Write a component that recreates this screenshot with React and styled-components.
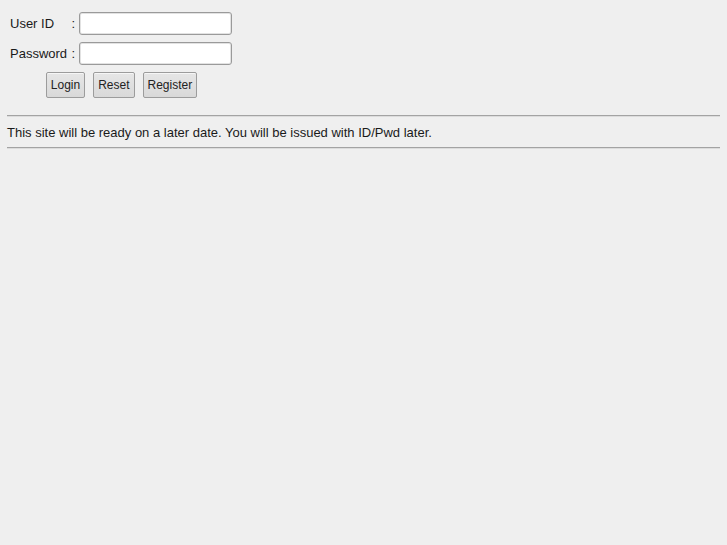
import React, { useState } from 'react';
import styled, { createGlobalStyle } from 'styled-components';

const GlobalStyle = createGlobalStyle`
  html, body {
    margin: 0;
    background: #efefef;
  }
  body {
    font-family: "Liberation Sans", Arial, sans-serif;
    font-size: 13px;
    color: #1a1a1a;
  }
`;

const Page = styled.div`
  padding: 7px;
`;

const LoginForm = styled.form`
  display: inline-grid;
  grid-template-columns: auto auto;
  column-gap: 4px;
  row-gap: 7px;
  align-items: center;
  padding: 5px 2px 0 3px;
`;

const Label = styled.label`
  display: flex;
  justify-content: space-between;
  width: 65px;
  white-space: pre;
`;

const TextInput = styled.input`
  box-sizing: border-box;
  width: 153px;
  height: 23px;
  margin: 0;
  padding: 2px 4px;
  border: 1px solid #9a9a9a;
  border-radius: 3px;
  background: #fff;
  box-shadow: inset 0 0 0 1px #e2e2e2;
  font: inherit;
  outline: none;
`;

const ButtonRow = styled.div`
  grid-column: 1 / span 2;
  display: flex;
  justify-content: center;
  gap: 8px;
  padding-left: 1px;
`;

const Button = styled.button`
  box-sizing: border-box;
  height: 26px;
  padding: 0 4px;
  border: 1px solid #9c9c9c;
  border-radius: 2px;
  background: linear-gradient(#e6e6e6, #d9d9d9);
  box-shadow: inset 0 1px 0 #f6f6f6;
  font-family: "Liberation Sans", Arial, sans-serif;
  font-size: 12px;
  color: #222;
  cursor: pointer;
`;

const Divider = styled.hr`
  margin: ${(p) => p.$top}px 0 0;
  height: 0;
  border: none;
  border-top: 1px solid #a3a3a3;
  border-bottom: 1px solid #dcdcdc;
`;

const Notice = styled.p`
  margin: 8px 0 7px;
  line-height: 15px;
`;

function App() {
  const [userId, setUserId] = useState('');
  const [password, setPassword] = useState('');

  const handleReset = () => {
    setUserId('');
    setPassword('');
  };

  return (
    <Page>
      <GlobalStyle />
      <LoginForm onSubmit={(e) => e.preventDefault()}>
        <Label htmlFor="uid">
          <span>User ID</span>
          <span>:</span>
        </Label>
        <TextInput id="uid" type="text" value={userId} onChange={(e) => setUserId(e.target.value)} />
        <Label htmlFor="pwd">
          <span>Password</span>
          <span>:</span>
        </Label>
        <TextInput id="pwd" type="password" value={password} onChange={(e) => setPassword(e.target.value)} />
        <ButtonRow>
          <Button type="submit">Login</Button>
          <Button type="button" onClick={handleReset}>Reset</Button>
          <Button type="button">Register</Button>
        </ButtonRow>
      </LoginForm>
      <Divider $top={17} />
      <Notice>This site will be ready on a later date. You will be issued with ID/Pwd later.</Notice>
      <Divider $top={0} />
    </Page>
  );
}

export default App;
